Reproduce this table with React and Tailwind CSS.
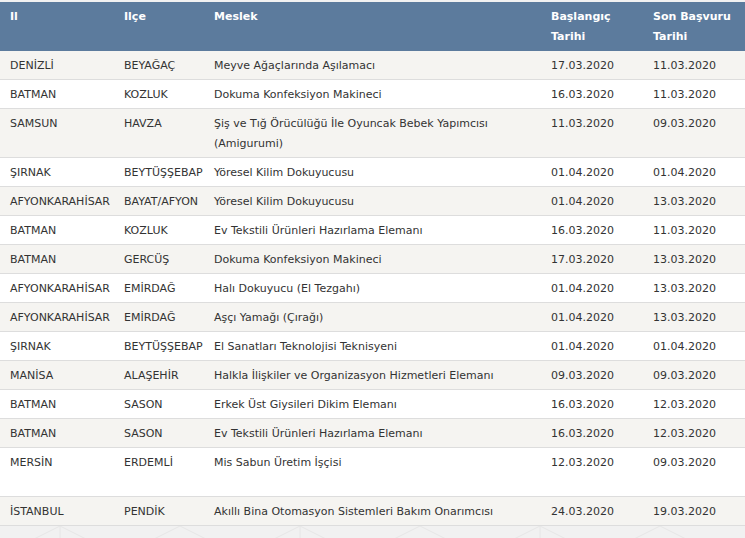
const rows = [
  ['DENİZLİ', 'BEYAĞAÇ', 'Meyve Ağaçlarında Aşılamacı', '17.03.2020', '11.03.2020'],
  ['BATMAN', 'KOZLUK', 'Dokuma Konfeksiyon Makineci', '16.03.2020', '11.03.2020'],
  ['SAMSUN', 'HAVZA', 'Şiş ve Tığ Örücülüğü İle Oyuncak Bebek Yapımcısı (Amigurumi)', '11.03.2020', '09.03.2020'],
  ['ŞIRNAK', 'BEYTÜŞŞEBAP', 'Yöresel Kilim Dokuyucusu', '01.04.2020', '01.04.2020'],
  ['AFYONKARAHİSAR', 'BAYAT/AFYON', 'Yöresel Kilim Dokuyucusu', '01.04.2020', '13.03.2020'],
  ['BATMAN', 'KOZLUK', 'Ev Tekstili Ürünleri Hazırlama Elemanı', '16.03.2020', '11.03.2020'],
  ['BATMAN', 'GERCÜŞ', 'Dokuma Konfeksiyon Makineci', '17.03.2020', '13.03.2020'],
  ['AFYONKARAHİSAR', 'EMİRDAĞ', 'Halı Dokuyucu (El Tezgahı)', '01.04.2020', '13.03.2020'],
  ['AFYONKARAHİSAR', 'EMİRDAĞ', 'Aşçı Yamağı (Çırağı)', '01.04.2020', '13.03.2020'],
  ['ŞIRNAK', 'BEYTÜŞŞEBAP', 'El Sanatları Teknolojisi Teknisyeni', '01.04.2020', '01.04.2020'],
  ['MANİSA', 'ALAŞEHİR', 'Halkla İlişkiler ve Organizasyon Hizmetleri Elemanı', '09.03.2020', '09.03.2020'],
  ['BATMAN', 'SASON', 'Erkek Üst Giysileri Dikim Elemanı', '16.03.2020', '12.03.2020'],
  ['BATMAN', 'SASON', 'Ev Tekstili Ürünleri Hazırlama Elemanı', '16.03.2020', '12.03.2020'],
  ['MERSİN', 'ERDEMLİ', 'Mis Sabun Üretim İşçisi', '12.03.2020', '09.03.2020', true],
  ['İSTANBUL', 'PENDİK', 'Akıllı Bina Otomasyon Sistemleri Bakım Onarımcısı', '24.03.2020', '19.03.2020'],
];

export default function App() {
  return (
    <div
      className="w-[745px] h-[538px] overflow-hidden bg-[#f1f1f1] pt-[2px] text-[11px] leading-[20px] text-[#333]"
      style={{ fontFamily: '"DejaVu Sans", Verdana, sans-serif' }}
    >
      <table className="w-[745px] table-fixed border-collapse">
        <colgroup>
          <col className="w-[114px]" />
          <col className="w-[90px]" />
          <col className="w-[337px]" />
          <col className="w-[102px]" />
          <col className="w-[102px]" />
        </colgroup>
        <thead>
          <tr className="bg-[#5c7b9d] text-white font-bold align-top">
            <th className="pl-[10px] pt-[5px] pb-[4px] text-left">Il</th>
            <th className="pl-[10px] pt-[5px] pb-[4px] text-left">Ilçe</th>
            <th className="pl-[10px] pt-[5px] pb-[4px] text-left">Meslek</th>
            <th className="pl-[10px] pt-[5px] pb-[4px] text-left">
              Başlangıç
              <br />
              Tarihi
            </th>
            <th className="pl-[10px] pt-[5px] pb-[4px] text-left">
              Son Başvuru
              <br />
              Tarihi
            </th>
          </tr>
        </thead>
        <tbody>
          {rows.map((r, i) => (
            <tr
              key={i}
              className={`align-top border-b border-[#dddddd] ${i % 2 === 0 ? 'bg-[#f5f4f1]' : 'bg-white'}`}
            >
              <td className="pl-[10px] pt-[5px] pb-[3px] whitespace-nowrap">{r[0]}</td>
              <td className="pl-[10px] pt-[5px] pb-[3px] whitespace-nowrap">{r[1]}</td>
              <td className="pl-[10px] pr-[20px] pt-[5px] pb-[3px]">
                {r[2]}
                {r[5] && <br />}
                {r[5] && <span>&nbsp;</span>}
              </td>
              <td className="pl-[10px] pt-[5px] pb-[3px]">{r[3]}</td>
              <td className="pl-[10px] pt-[5px] pb-[3px]">{r[4]}</td>
            </tr>
          ))}
        </tbody>
      </table>
      <svg width="745" height="20" className="block opacity-40">
        <g stroke="#d8d8d8" strokeWidth="1" fill="none">
          <path d="M20 20 L60 0 L100 20 M60 0 L60 20 M140 20 L180 0 L220 20 M260 20 L300 0 L340 20 M300 0 L300 20 M380 20 L420 0 L460 20 M500 20 L540 0 L580 20 M540 0 L540 20 M620 20 L660 0 L700 20" />
        </g>
      </svg>
    </div>
  );
}
